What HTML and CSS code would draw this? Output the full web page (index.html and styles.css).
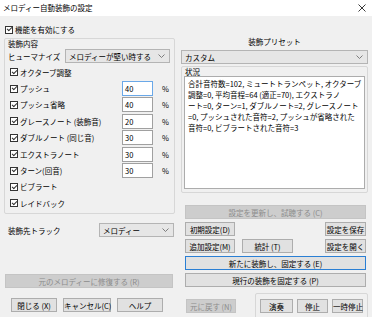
FILE: index.html
```html
<!DOCTYPE html>
<html lang="ja">

<head>
  <meta charset="UTF-8">
  <title>メロディー自動装飾の設定</title>
  <link rel="stylesheet" href="styles.css">
</head>

<body>
  <div class="window">
    <div class="titlebar">
      <span class="title">メロディー自動装飾の設定</span>
      <svg class="close" width="8" height="8" viewBox="0 0 8 8">
        <path d="M0.5 0.5 L7.5 7.5 M7.5 0.5 L0.5 7.5" stroke="#222" stroke-width="0.9" fill="none" />
      </svg>
    </div>

    <div class="main">
      <!-- left column -->
      <div class="left">
        <label class="check enable"><span class="box"></span>機能を有効にする</label>

        <div class="group content">
          <div class="group-title">装飾内容</div>
          <div class="humanize">
            <span class="humanize-label">ヒューマナイズ</span>
            <div class="select humanize-select">メロディーが堅い時する
              <svg width="7" height="4" viewBox="0 0 7 4"><polyline points="0.5,0.5 3.5,3.5 6.5,0.5" fill="none" stroke="#707070" stroke-width="0.9" /></svg>
            </div>
          </div>

          <div class="opt"><label class="check"><span class="box"></span>オクターブ調整</label></div>
          <div class="opt"><label class="check"><span class="box"></span>プッシュ</label><span class="num hot">40</span><span class="pct">%</span></div>
          <div class="opt"><label class="check"><span class="box"></span>プッシュ省略</label><span class="num">40</span><span class="pct">%</span></div>
          <div class="opt"><label class="check"><span class="box"></span>グレースノート (装飾音)</label><span class="num">20</span><span class="pct">%</span></div>
          <div class="opt"><label class="check"><span class="box"></span>ダブルノート (同じ音)</label><span class="num">30</span><span class="pct">%</span></div>
          <div class="opt"><label class="check"><span class="box"></span>エクストラノート</label><span class="num">30</span><span class="pct">%</span></div>
          <div class="opt"><label class="check"><span class="box"></span>ターン(回音)</label><span class="num">30</span><span class="pct">%</span></div>
          <div class="opt"><label class="check"><span class="box"></span>ビブラート</label></div>
          <div class="opt"><label class="check"><span class="box"></span>レイドバック</label></div>
        </div>

        <div class="track">
          <span class="track-label">装飾先トラック</span>
          <div class="select track-select">メロディー
            <svg width="7" height="4" viewBox="0 0 7 4"><polyline points="0.5,0.5 3.5,3.5 6.5,0.5" fill="none" stroke="#707070" stroke-width="0.9" /></svg>
          </div>
        </div>

        <button class="btn disabled restore">元のメロディーに修復する (R)</button>

        <div class="bottom-btns">
          <button class="btn close-btn">閉じる (X)</button>
          <button class="btn cancel-btn">キャンセル(C)</button>
          <button class="btn help-btn">ヘルプ</button>
        </div>
      </div>

      <!-- right column -->
      <div class="right">
        <div class="preset-label">装飾プリセット</div>
        <div class="select preset-select">カスタム
          <svg width="7" height="4" viewBox="0 0 7 4"><polyline points="0.5,0.5 3.5,3.5 6.5,0.5" fill="none" stroke="#707070" stroke-width="0.9" /></svg>
        </div>

        <div class="group status">
          <div class="status-title">状況</div>
          <div class="status-box">
            合計音符数=102, ミュートトランペット, オクターブ<br>
            調整=0, 平均音程=64 (適正=70), エクストラノ<br>
            ート=0, ターン=1, ダブルノート=2, グレースノート<br>
            =0, プッシュされた音符=2, プッシュが省略された<br>
            音符=0, ビブラートされた音符=3
          </div>
        </div>

        <button class="btn disabled wide first">設定を更新し、試聴する (C)</button>

        <div class="btn-row">
          <button class="btn small">初期設定(D)</button>
          <button class="btn save">設定を保存</button>
        </div>
        <div class="btn-row">
          <button class="btn small">追加設定(M)</button>
          <button class="btn stats">統計 (T)</button>
          <button class="btn save">設定を開く</button>
        </div>

        <button class="btn wide focus">新たに装飾し、固定する (E)</button>
        <button class="btn wide">現行の装飾を固定する (P)</button>

        <div class="play-row">
          <button class="btn disabled undo">元に戻す (N)</button>
          <div class="play-group">
            <button class="btn play">演奏</button>
            <button class="btn stop">停止</button>
            <button class="btn stop">一時停止</button>
          </div>
        </div>
      </div>
    </div>
  </div>
</body>

</html>
```

FILE: styles.css
```css
body {
  margin: 0;
  font-family: "Noto Sans CJK JP", "Noto Sans", sans-serif;
  font-size: 7.5px;
  color: #000;
  background-color: #f0f0f0;
}

.window {
  width: 372px;
  height: 317px;
  overflow: hidden;
  background-color: #f0f0f0;
}

.titlebar {
  height: 16px;
  background-color: #fff;
  display: flex;
  align-items: center;
  justify-content: space-between;
  padding: 0 6px 1px 3px;
  box-sizing: border-box;
}

.main {
  display: grid;
  grid-template-columns: 171px 187px;
  column-gap: 6px;
  padding: 0 4px;
}

/* checkboxes */
.check {
  display: flex;
  align-items: center;
  white-space: nowrap;
}

.box {
  position: relative;
  width: 8px;
  height: 8px;
  flex: none;
  box-sizing: border-box;
  border: 1px solid #333;
  background-color: #fff;
  margin-right: 2px;
}

.box::after {
  content: "";
  position: absolute;
  left: 1.6px;
  top: -0.2px;
  width: 2px;
  height: 4px;
  border: solid #333;
  border-width: 0 1px 1px 0;
  transform: rotate(45deg);
}

.enable {
  height: 11px;
  margin-top: 8px;
  margin-left: 1px;
}

.group {
  border: 1px solid #d7d7d7;
  border-radius: 2px;
  box-sizing: border-box;
}

.content {
  height: 176px;
  margin-top: 3px;
}

.group-title {
  height: 9px;
  line-height: 9px;
  padding-left: 3px;
}

.humanize {
  display: flex;
  align-items: center;
  height: 16px;
  padding-left: 3px;
}

.humanize-label {
  width: 57px;
}

.select {
  display: flex;
  align-items: center;
  justify-content: space-between;
  height: 14px;
  box-sizing: border-box;
  border: 1px solid #b4b4b4;
  background-color: #e6e6e6;
  padding: 0 4px 0 3px;
  white-space: nowrap;
}

.humanize-select {
  width: 105px;
}

.opt {
  display: grid;
  grid-template-columns: 112px 31px auto;
  align-items: center;
  height: 16.4px;
  padding-left: 5px;
}

.num {
  height: 15px;
  line-height: 13px;
  box-sizing: border-box;
  border: 1px solid #a0a0a0;
  background-color: #fff;
  padding-left: 2px;
}

.num.hot {
  border-color: #6aa8e8;
}

.pct {
  padding-left: 9px;
}

.track {
  display: flex;
  align-items: center;
  height: 16px;
  margin-top: 8px;
  padding-left: 4px;
}

.track-label {
  width: 91px;
}

.track-select {
  width: 75px;
}

/* buttons */
.btn {
  font: inherit;
  color: #000;
  height: 14px;
  padding: 0;
  box-sizing: border-box;
  border: 1px solid #adadad;
  background-color: #e1e1e1;
  white-space: nowrap;
  display: block;
}

.btn.disabled {
  background-color: #cdcdcd;
  border-color: #c4c4c4;
  color: #8c8c8c;
}

.btn.focus {
  border-color: #2a7fd4;
}

.restore {
  width: 168px;
  margin: 36px 0 0 1px;
}

.bottom-btns {
  display: flex;
  gap: 6px;
  margin-top: 10px;
  padding-left: 7px;
}

.close-btn,
.help-btn {
  width: 46px;
}

.cancel-btn {
  width: 48px;
}

/* right column */
.preset-label {
  height: 10px;
  line-height: 10px;
  margin-top: 21px;
  text-align: center;
}

.preset-select {
  margin-top: 3px;
}

.status {
  margin-top: 2px;
  padding: 0 2px 3px 2px;
}

.status-title {
  height: 9px;
  line-height: 9px;
  padding-left: 1px;
}

.status-box {
  height: 113px;
  box-sizing: border-box;
  border: 1px solid #acacac;
  background-color: #fff;
  padding: 1px 3px;
  line-height: 11px;
  white-space: nowrap;
  overflow: hidden;
}

.wide {
  width: 181px;
  margin: 3px 0 0 4px;
}

.wide.first {
  margin-top: 12px;
}

.btn-row {
  display: flex;
  margin: 3px 2px 0 4px;
}

.small {
  width: 50px;
}

.stats {
  width: 51px;
  margin-left: 7px;
}

.save {
  width: 41px;
  margin-left: auto;
}

.play-row {
  display: flex;
  margin-top: 6px;
}

.undo {
  width: 50px;
  margin: 6px 0 0 5px;
}

.play-group {
  display: flex;
  gap: 4px;
  margin-left: auto;
  width: 113px;
  height: 30px;
  box-sizing: border-box;
  border: 1px solid #d7d7d7;
  border-radius: 2px;
  padding: 5px 0 0 4px;
}

.play {
  width: 33px;
}

.stop {
  width: 31px;
}
```
